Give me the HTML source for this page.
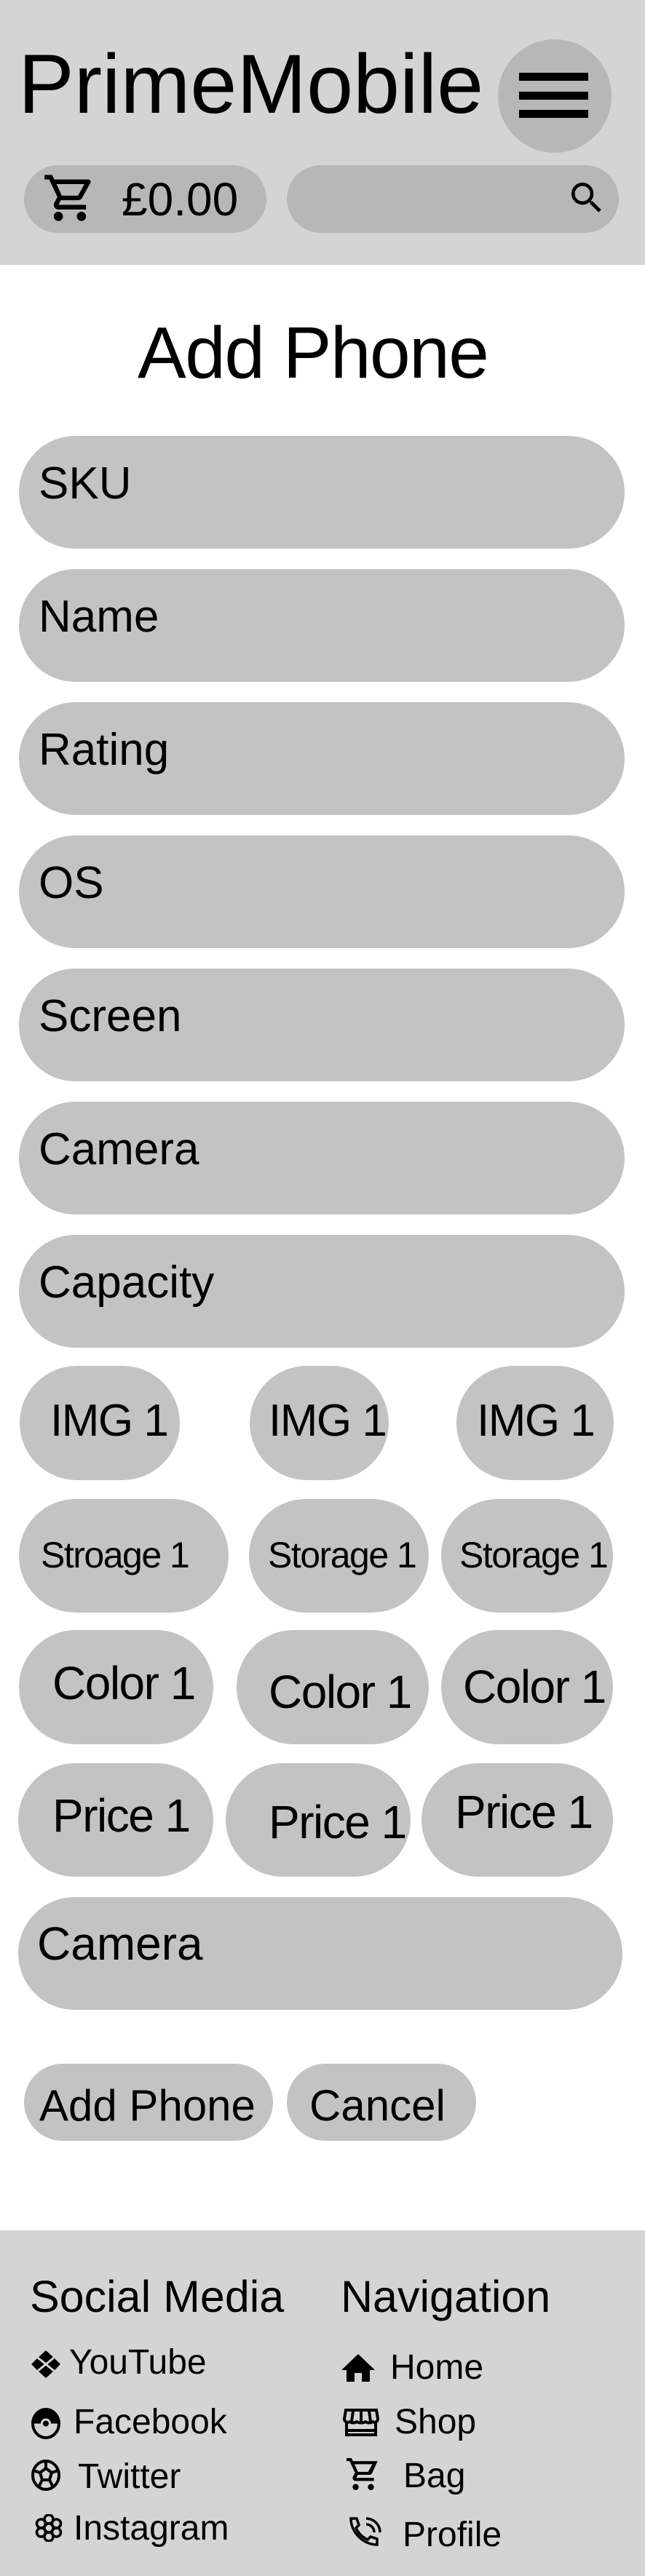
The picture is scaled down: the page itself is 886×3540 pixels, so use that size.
<!DOCTYPE html>
<html><head><meta charset="utf-8"><style>
*{margin:0;padding:0;box-sizing:border-box}
body{width:886px;height:3540px;position:relative;background:#fff;font-family:"Liberation Sans",sans-serif;color:#000;overflow:hidden}
.a{position:absolute}
.t{position:absolute;line-height:1;white-space:nowrap}
.n{letter-spacing:-1.5px}
.f{position:absolute;background:#c3c3c3;border-radius:80px}
.g{background:#b7b7b7}
</style></head><body>
<div class="a" style="left:0;top:0;width:886px;height:364px;background:#d4d4d4"></div>
<div class="t" style="left:25px;top:59px;font-size:115px">PrimeMobile</div>
<div class="a g" style="left:684px;top:54px;width:156px;height:156px;border-radius:50%"></div>
<div class="a" style="left:713px;top:100px;width:95px;height:11px;background:#000"></div>
<div class="a" style="left:713px;top:126px;width:95px;height:11px;background:#000"></div>
<div class="a" style="left:713px;top:151px;width:95px;height:11px;background:#000"></div>
<div class="a g" style="left:33px;top:227px;width:333px;height:93px;border-radius:47px"></div>
<svg class="a" style="left:58px;top:234px" width="76" height="76" viewBox="0 0 24 24"><path d="M7 18c-1.1 0-1.99.9-1.99 2S5.9 22 7 22s2-.9 2-2-.9-2-2-2zM1 2v2h2l3.6 7.59-1.35 2.450c-.16.28-.25.61-.25.96 0 1.1.9 2 2 2h12v-2H7.42c-.14 0-.25-.11-.25-.25l.03-.12.9-1.63h7.45c.75 0 1.41-.41 1.750-1.03l3.58-6.49A1.003 1.003 0 0020 4H5.21l-.94-2H1zm16 16c-1.1 0-1.99.9-1.99 2s.89 2 1.99 2 2-.9 2-2-.9-2-2-2z M6.2 6h12.1l-2.8 5H8.5z" fill="#000" fill-rule="evenodd"/></svg>
<div class="t" style="left:167px;top:242px;font-size:64px">£0.00</div>
<div class="a g" style="left:394px;top:227px;width:456px;height:93px;border-radius:47px"></div>
<svg class="a" style="left:778px;top:244px" width="56" height="56" viewBox="0 0 24 24"><path d="M15.5 14h-.79l-.28-.27A6.47 6.47 0 0016 9.5 6.5 6.5 0 109.5 16c1.610 0 3.09-.59 4.23-1.57l.27.28v.79l5 4.990L20.49 19l-4.99-5zm-6 0C7.01 14 5 11.99 5 9.5S7.01 5 9.5 5 14 7.01 14 9.5 11.99 14 9.5 14z"/></svg>
<div class="t n" style="left:189px;top:435px;font-size:100px">Add Phone</div>

<div class="f" style="left:26px;top:599px;width:832px;height:155px"></div><div class="t" style="left:53px;top:634px;font-size:62px">SKU</div>
<div class="f" style="left:26px;top:782px;width:832px;height:155px"></div><div class="t" style="left:53px;top:817px;font-size:62px">Name</div>
<div class="f" style="left:26px;top:965px;width:832px;height:155px"></div><div class="t" style="left:53px;top:1000px;font-size:62px">Rating</div>
<div class="f" style="left:26px;top:1148px;width:832px;height:155px"></div><div class="t" style="left:53px;top:1183px;font-size:62px">OS</div>
<div class="f" style="left:26px;top:1331px;width:832px;height:155px"></div><div class="t" style="left:53px;top:1366px;font-size:62px">Screen</div>
<div class="f" style="left:26px;top:1514px;width:832px;height:155px"></div><div class="t" style="left:53px;top:1549px;font-size:62px">Camera</div>
<div class="f" style="left:26px;top:1697px;width:832px;height:155px"></div><div class="t" style="left:53px;top:1732px;font-size:62px">Capacity</div>

<div class="f" style="left:27px;top:1877px;width:220px;height:157px"></div><div class="t n" style="left:69px;top:1922px;font-size:62px">IMG 1</div>
<div class="f" style="left:343px;top:1877px;width:191px;height:157px"></div><div class="t n" style="left:369px;top:1922px;font-size:62px">IMG 1</div>
<div class="f" style="left:627px;top:1877px;width:216px;height:157px"></div><div class="t n" style="left:655px;top:1922px;font-size:62px">IMG 1</div>

<div class="f" style="left:26px;top:2060px;width:288px;height:156px"></div><div class="t n" style="left:56px;top:2112px;font-size:50px">Stroage 1</div>
<div class="f" style="left:342px;top:2060px;width:247px;height:156px"></div><div class="t n" style="left:368px;top:2112px;font-size:50px">Storage 1</div>
<div class="f" style="left:606px;top:2060px;width:236px;height:156px"></div><div class="t n" style="left:631px;top:2112px;font-size:50px">Storage 1</div>

<div class="f" style="left:26px;top:2240px;width:267px;height:157px"></div><div class="t n" style="left:72px;top:2281px;font-size:64px">Color 1</div>
<div class="f" style="left:325px;top:2240px;width:264px;height:157px"></div><div class="t n" style="left:369px;top:2293px;font-size:64px">Color 1</div>
<div class="f" style="left:606px;top:2240px;width:236px;height:157px"></div><div class="t n" style="left:636px;top:2286px;font-size:64px">Color 1</div>

<div class="f" style="left:25px;top:2423px;width:268px;height:156px"></div><div class="t n" style="left:72px;top:2463px;font-size:64px">Price 1</div>
<div class="f" style="left:310px;top:2423px;width:254px;height:156px"></div><div class="t n" style="left:369px;top:2472px;font-size:64px">Price 1</div>
<div class="f" style="left:579px;top:2423px;width:263px;height:156px"></div><div class="t n" style="left:625px;top:2458px;font-size:64px">Price 1</div>

<div class="f" style="left:25px;top:2607px;width:830px;height:155px"></div><div class="t" style="left:51px;top:2639px;font-size:64px">Camera</div>

<div class="f" style="left:33px;top:2836px;width:342px;height:106px"></div><div class="t" style="left:54px;top:2864px;font-size:60px">Add Phone</div>
<div class="f" style="left:394px;top:2836px;width:260px;height:106px"></div><div class="t" style="left:425px;top:2864px;font-size:60px">Cancel</div>

<div class="a" style="left:0;top:3065px;width:886px;height:475px;background:#d4d4d4"></div>
<div class="t" style="left:41px;top:3126px;font-size:61px">Social Media</div>
<div class="t" style="left:468px;top:3126px;font-size:61px">Navigation</div>

<svg class="a" style="left:43px;top:3230px" width="40" height="38" viewBox="0 0 40 38"><path d="M20 0L31 10 20 18 9 10Z M20 20L31 28 20 38 9 28Z M0 19L9 10 18 19 9 28Z M40 19L31 10 22 19 31 28Z" fill="#000"/><path d="M9 10L31 28M31 10L9 28" stroke="#d4d4d4" stroke-width="3"/></svg>
<div class="t" style="left:95px;top:3223px;font-size:48px">YouTube</div>
<svg class="a" style="left:43px;top:3309px" width="40" height="43" viewBox="0 0 40 43"><ellipse cx="20" cy="21.5" rx="18" ry="19.5" fill="none" stroke="#000" stroke-width="4"/><path d="M2 21.5A18 19.5 0 0 1 38 21.5Z" fill="#000"/><circle cx="20" cy="21.5" r="7" fill="#d4d4d4"/><circle cx="20" cy="21.5" r="4" fill="#000"/></svg>
<div class="t" style="left:101px;top:3305px;font-size:48px">Facebook</div>
<svg class="a" style="left:43px;top:3380px" width="40" height="43" viewBox="0 0 40 43"><ellipse cx="20" cy="21.5" rx="18" ry="19.5" fill="none" stroke="#000" stroke-width="4"/><path d="M20 12L28 18 25 28H15L12 18Z" fill="none" stroke="#000" stroke-width="4"/><path d="M20 3V12M28 18L37 15M25 28L30 38M15 28L10 38M12 18L3 15" stroke="#000" stroke-width="4"/></svg>
<div class="t" style="left:107px;top:3380px;font-size:48px">Twitter</div>
<svg class="a" style="left:48px;top:3455px" width="38" height="38" viewBox="0 0 38 38" fill="none" stroke="#000" stroke-width="3.5"><circle cx="19" cy="19" r="6"/><circle cx="19" cy="7" r="6"/><circle cx="19" cy="31" r="6"/><circle cx="8.5" cy="13" r="6"/><circle cx="29.5" cy="13" r="6"/><circle cx="8.5" cy="25" r="6"/><circle cx="29.5" cy="25" r="6"/></svg>
<div class="t" style="left:101px;top:3451px;font-size:48px">Instagram</div>

<svg class="a" style="left:469px;top:3235px" width="46" height="38" viewBox="0 0 46 38"><path d="M23 0L46 22H39V38H28V26H18V38H7V22H0Z" fill="#000"/></svg>
<div class="t" style="left:536px;top:3230px;font-size:48px">Home</div>
<svg class="a" style="left:471px;top:3310px" width="50" height="38" viewBox="0 0 50 38" fill="none" stroke="#000" stroke-width="4"><path d="M4 2H46L48 14C48 18 44 20 41 18 38 20 34 20 31 18 28 20 22 20 19 18 16 20 12 20 9 18 6 20 2 18 2 14Z"/><path d="M14 3L12 18M25 3V18M36 3L38 18"/><path d="M5 19V36H45V19"/><path d="M5 30H45"/></svg>
<div class="t" style="left:542px;top:3305px;font-size:48px">Shop</div>
<svg class="a" style="left:472px;top:3378px" width="54" height="46" viewBox="0 0 24 22"><path d="M7 17c-1.1 0-2 .9-2 2s.9 2 2 2 2-.9 2-2-.9-2-2-2zM1 0v2h2l3.6 7.6-1.35 2.4c-.16.3-.25.6-.25 1 0 1.1.9 2 2 2h12v-2H7.4l1.1-2h7.5c.75 0 1.4-.4 1.75-1L21.4 2H5.2l-.9-2zM6.2 4h11.8l-2.8 5H8.5zM17 17c-1.1 0-2 .9-2 2s.9 2 2 2 2-.9 2-2-.9-2-2-2z" fill="#000" fill-rule="evenodd"/></svg>
<div class="t" style="left:554px;top:3379px;font-size:48px">Bag</div>
<svg class="a" style="left:479px;top:3458px" width="46" height="42" viewBox="0 0 46 42" fill="none" stroke="#000" stroke-width="3.5"><path d="M3 3H11L14 12 10 16C13 23 19 29 26 32L30 28 39 31V39C20 39 3 22 3 3Z"/><path d="M24 3A19 19 0 0 1 43 22M24 11A11 11 0 0 1 35 22"/></svg>
<div class="t" style="left:553px;top:3460px;font-size:48px">Profile</div>
</body></html>
